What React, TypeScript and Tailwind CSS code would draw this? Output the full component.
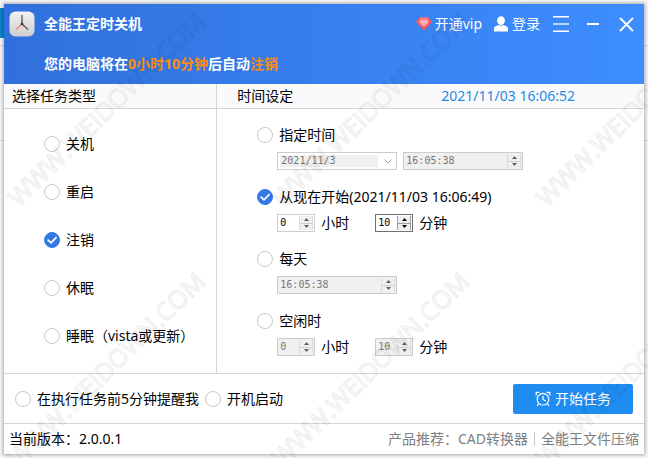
import { useState } from "react";
import clsx from "clsx";

interface CircleCheckProps {
    id: string;
    type?: "radio" | "checkbox";
    name?: string;
    label: string;
    checked: boolean;
    onChange: () => void;
}

const CircleCheck = ({ id, type = "radio", name, label, checked, onChange }: CircleCheckProps) => {
    return (
        <div className="flex h-[18px] items-center gap-1.5">
            <span className="grid h-4 w-4 shrink-0">
                <input
                    id={id}
                    type={type}
                    name={name}
                    checked={checked}
                    onChange={onChange}
                    className="peer col-start-1 row-start-1 h-4 w-4 appearance-none rounded-full border border-[#c8c8c8] bg-white checked:border-[#3478e8] checked:bg-[#3478e8]"
                />
                <svg
                    viewBox="0 0 16 16"
                    className="pointer-events-none col-start-1 row-start-1 hidden h-4 w-4 peer-checked:block"
                    fill="none"
                    stroke="#fff"
                    strokeWidth="1.7"
                >
                    <path d="M3.6 7.6 L7 10.8 L12.6 5.2" />
                </svg>
            </span>
            <label htmlFor={id} className="whitespace-nowrap">{label}</label>
        </div>
    )
}

interface SpinBoxProps {
    label: string;
    value: string;
    wide?: boolean;
    tone?: "active" | "normal" | "disabled";
}

const SpinBox = ({ label, value, wide, tone = "disabled" }: SpinBoxProps) => {

    const disabled = tone === "disabled";

    return (
        <div
            className={clsx(
                "flex h-[18px] border",
                wide ? "w-[120px]" : "w-[38px]",
                tone === "active" ? "border-[#707070]" : "border-[#cccccc]",
                disabled ? "bg-[#f0f0f0] text-[#787878]" : "bg-white text-black"
            )}
        >
            <input
                type="text"
                aria-label={label}
                defaultValue={value}
                disabled={disabled}
                className="w-0 min-w-0 flex-1 bg-transparent pl-0.5 font-['DejaVu_Sans_Mono',monospace] text-[10px] leading-4 outline-none"
            />
            <div
                className={clsx(
                    "m-px flex w-3.5 flex-col border-x bg-[#f0f0f0]",
                    tone === "active" ? "border-[#a0a0a0] text-black" : "border-[#dadada] text-[#606060]"
                )}
            >
                <button type="button" aria-label={`${label} +`} disabled={disabled} className="flex flex-1 items-center justify-center">
                    <svg viewBox="0 0 5 3" className="h-[3px] w-[5px]" fill="currentColor"><path d="M0 3 L2.5 0 L5 3Z" /></svg>
                </button>
                <button
                    type="button"
                    aria-label={`${label} -`}
                    disabled={disabled}
                    className={clsx("flex flex-1 items-center justify-center border-t", tone === "active" ? "border-[#a0a0a0]" : "border-[#d0d0d0]")}
                >
                    <svg viewBox="0 0 5 3" className="h-[3px] w-[5px]" fill="currentColor"><path d="M0 0 L2.5 3 L5 0Z" /></svg>
                </button>
            </div>
        </div>
    )
}

interface DurationProps {
    name: string;
    hours: string;
    minutes: string;
    enabled?: boolean;
}

const Duration = ({ name, hours, minutes, enabled }: DurationProps) => (
    <div className="flex h-[18px] items-center gap-1.5 pl-5">
        <SpinBox label={`${name} 小时`} value={hours} tone={enabled ? "normal" : "disabled"} />
        <span className="w-12">小时</span>
        <SpinBox label={`${name} 分钟`} value={minutes} tone={enabled ? "active" : "disabled"} />
        <span>分钟</span>
    </div>
)

const ClockLogo = () => (
    <svg viewBox="0 0 26 26" className="h-[26px] w-[26px]" fill="none">
        <defs>
            <linearGradient id="logo" x1="0" y1="0" x2="0" y2="1">
                <stop offset="0" stopColor="#f2f2f2" />
                <stop offset="1" stopColor="#cfcfcf" />
            </linearGradient>
        </defs>
        <rect x="0.5" y="0.5" width="25" height="25" rx="6" fill="url(#logo)" />
        <path d="M13 4 V13 L19 18.5" stroke="#555" strokeWidth="1.3" />
        <path d="M13 13 L7 18.5" stroke="#e88080" strokeWidth="1.2" />
        <circle cx="13" cy="13" r="1.3" fill="#333" />
    </svg>
)

const GemIcon = () => (
    <svg viewBox="0 0 16 14" className="h-3.5 w-4">
        <path d="M3.5 0.5 H12.5 L16 5 L8 13.5 L0 5Z" fill="#fb5a63" />
        <path d="M3.5 0.5 H12.5 L11.5 3 H4.5Z" fill="#ff7f84" />
        <path d="M4.5 3 H11.5 L12.7 5.2 L8 9.6 L3.3 5.2Z" fill="#ffb0b0" />
    </svg>
)

const UserIcon = () => (
    <svg viewBox="0 0 14 16" className="h-4 w-3.5" fill="#fff">
        <ellipse cx="7" cy="4.6" rx="3.9" ry="4.4" />
        <path d="M0 15.5 V13 Q0 10.2 3.4 9.6 L4.6 9 Q7 10.6 9.4 9 L10.6 9.6 Q14 10.2 14 13 V15.5Z" />
    </svg>
)

const AlarmIcon = () => (
    <svg viewBox="0 0 16 16" className="h-4 w-4" fill="none" stroke="#fff" strokeWidth="1.2">
        <circle cx="8" cy="8.2" r="5.8" />
        <path d="M8 4.8 V8.4 L10.8 10" />
        <path d="M1.2 4.4 V1.4 H4.4 M11.6 1.4 H14.8 V4.4" />
        <path d="M3.8 12.6 L2 14.8 M12.2 12.6 L14 14.8" />
    </svg>
)

const Watermark = () => (
    <svg aria-hidden="true" className="pointer-events-none absolute inset-0 h-full w-full">
        <defs>
            <pattern id="mark" x="-28" y="-28" width="264" height="260" patternUnits="userSpaceOnUse">
                <text
                    transform="translate(47 236) rotate(-44.5)"
                    fontFamily="Open Sans, sans-serif"
                    fontSize="25"
                    fill="none"
                    stroke="#000"
                    strokeOpacity="0.07"
                    strokeWidth="1.2"
                >
                    WWW.WEIDOWN.COM
                </text>
            </pattern>
        </defs>
        <rect width="100%" height="100%" fill="url(#mark)" />
    </svg>
)

// The page that shows round the edges of the window
const Backdrop = () => (
    <div className="absolute inset-0 bg-[#f4f4f4]">
        <div className="absolute top-2 left-0 h-[30px] w-full bg-linear-to-r from-[#0a83c8] from-50% to-[#f4f4f4] to-50%" />
        <div className="absolute top-[45px] left-0 h-24 w-full border-y border-[#d8d8d8]" />
    </div>
)

const tasks = ["关机", "重启", "注销", "休眠", "睡眠（vista或更新）"];

export default function App() {

    const [task, setTask] = useState("注销");
    const [mode, setMode] = useState("delay");
    const [remind, setRemind] = useState(false);
    const [autoStart, setAutoStart] = useState(false);

    return (
        <div className="relative min-h-screen overflow-hidden p-1 font-['Noto_Sans','Noto_Sans_CJK_SC',sans-serif] text-sm leading-[18px] text-black">
            <Backdrop />

            <main className="relative bg-white shadow-[0_0_3px_1px_rgba(0,0,0,0.3)]">
                <header className="bg-linear-to-r from-[#3070dc] to-[#3e8eff] text-white">
                    <div className="flex h-10 items-center pr-2.5 pl-[5px]">
                        <ClockLogo />
                        <h1 className="ml-[9px] flex-1 font-bold">全能王定时关机</h1>
                        <button type="button" className="mr-3 flex items-center gap-[3px]">
                            <GemIcon />
                            开通vip
                        </button>
                        <button type="button" className="mr-[13px] flex items-center gap-1">
                            <UserIcon />
                            登录
                        </button>
                        <button type="button" aria-label="菜单" className="mr-[18px]">
                            <svg viewBox="0 0 16 16" className="h-4 w-4" stroke="#fff">
                                <path d="M0 0.8 H16 M0 15.2 H16" strokeWidth="1.4" />
                                <path d="M0 8 H16" strokeWidth="1.6" opacity="0.75" />
                            </svg>
                        </button>
                        <button type="button" aria-label="最小化" className="mr-5">
                            <svg viewBox="0 0 12 16" className="h-4 w-3" stroke="#fff" strokeWidth="2"><path d="M0 8 H12" /></svg>
                        </button>
                        <button type="button" aria-label="关闭">
                            <svg viewBox="0 0 15 15" className="h-[15px] w-[15px]" stroke="#fff" strokeWidth="1.8"><path d="M1 1 L14 14 M14 1 L1 14" /></svg>
                        </button>
                    </div>
                    <p className="flex h-10 items-center pl-10 font-bold">
                        您的电脑将在<span className="text-[#ff8a10]">0小时10分钟</span>后自动<span className="text-[#ff8a10]">注销</span>
                    </p>
                </header>

                <div className="grid grid-cols-[1fr_2fr] border-b border-[#d6d6d6]">
                    <section className="border-r border-[#d6d6d6]">
                        <h2 className="flex h-[25px] items-center border-b border-[#d6d6d6] bg-[#fafafa] pl-2">选择任务类型</h2>
                        <div className="flex flex-col gap-[30px] pt-[26px] pl-10">
                            {tasks.map((name, i) => (
                                <CircleCheck
                                    key={name}
                                    id={`task-${i}`}
                                    name="task"
                                    label={name}
                                    checked={task === name}
                                    onChange={() => setTask(name)}
                                />
                            ))}
                        </div>
                    </section>

                    <section>
                        <div className="flex h-[25px] items-center border-b border-[#d6d6d6] bg-[#fafafa] pr-[69px] pl-5">
                            <h2 className="flex-1">时间设定</h2>
                            <time className="text-[#1e8ae6]">2021/11/03 16:06:52</time>
                        </div>
                        <div className="flex flex-col gap-[18px] pt-[17px] pb-[17px] pl-10">
                            <div className="flex flex-col gap-2">
                                <CircleCheck id="mode-at" name="mode" label="指定时间" checked={mode === "at"} onChange={() => setMode("at")} />
                                <div className="flex gap-1.5 pl-5">
                                    <div className="flex h-[18px] w-[120px] items-center border border-[#cccccc] bg-white p-0.5">
                                        <select
                                            aria-label="日期"
                                            disabled
                                            className="h-3 w-[98px] appearance-none bg-[#f0f0f0] pl-px font-['DejaVu_Sans_Mono',monospace] text-[10px] leading-3 text-[#787878] opacity-100"
                                        >
                                            <option>2021/11/3</option>
                                        </select>
                                        <svg viewBox="0 0 8 5" className="ml-1.5 h-[5px] w-2" fill="none" stroke="#a0a0a0"><path d="M0.5 0.5 L4 4 L7.5 0.5" /></svg>
                                    </div>
                                    <SpinBox label="时间" value="16:05:38" wide />
                                </div>
                            </div>
                            <div className="flex flex-col gap-2">
                                <CircleCheck
                                    id="mode-delay"
                                    name="mode"
                                    label="从现在开始(2021/11/03 16:06:49)"
                                    checked={mode === "delay"}
                                    onChange={() => setMode("delay")}
                                />
                                <Duration name="从现在开始" hours="0" minutes="10" enabled />
                            </div>
                            <div className="flex flex-col gap-2">
                                <CircleCheck id="mode-daily" name="mode" label="每天" checked={mode === "daily"} onChange={() => setMode("daily")} />
                                <div className="pl-5">
                                    <SpinBox label="每天时间" value="16:05:38" wide />
                                </div>
                            </div>
                            <div className="flex flex-col gap-2">
                                <CircleCheck id="mode-idle" name="mode" label="空闲时" checked={mode === "idle"} onChange={() => setMode("idle")} />
                                <Duration name="空闲时" hours="0" minutes="10" />
                            </div>
                        </div>
                    </section>
                </div>

                <div className="flex items-center gap-1.5 border-b border-[#d6d6d6] px-[11px] pt-2.5 pb-[9px]">
                    <CircleCheck
                        id="remind"
                        type="checkbox"
                        label="在执行任务前5分钟提醒我"
                        checked={remind}
                        onChange={() => setRemind(!remind)}
                    />
                    <CircleCheck
                        id="autostart"
                        type="checkbox"
                        label="开机启动"
                        checked={autoStart}
                        onChange={() => setAutoStart(!autoStart)}
                    />
                    <button type="button" className="ml-auto flex h-[30px] w-[120px] items-center justify-center gap-1 rounded-xs bg-[#1e8cf0] text-white">
                        <AlarmIcon />
                        开始任务
                    </button>
                </div>

                <footer className="flex h-[30px] items-center px-[5px]">
                    <span className="flex-1">当前版本：2.0.0.1</span>
                    <span className="text-[#808080]">产品推荐：</span>
                    <a href="#cad" className="text-[#808080]">CAD转换器</a>
                    <span className="mx-1.5 h-3.5 w-px bg-[#c8c8c8]" />
                    <a href="#zip" className="text-[#808080]">全能王文件压缩</a>
                </footer>
            </main>

            <Watermark />
        </div>
    )
}
